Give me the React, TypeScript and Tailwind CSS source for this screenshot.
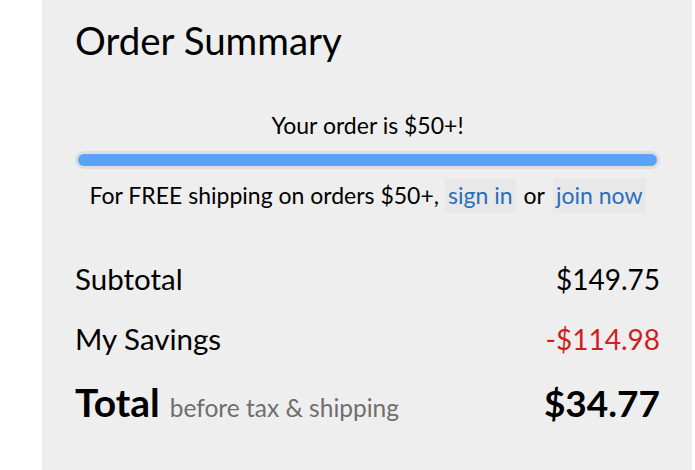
export default function App() {
  return (
    <div className="min-h-screen bg-white font-['Lato',sans-serif] text-black">
      <div className="ml-[42px] mr-[3px] h-[470px] bg-[#eeeeee] pl-[33px] pr-[32px] pt-[18px]">
        <h1 className="text-[38.5px] leading-[44px]">Order Summary</h1>

        <div className="mt-[49px] text-center text-[23px] leading-[28px]">Your order is $50+!</div>
        <div className="mt-[12px] h-[18px] rounded-full bg-[#dedede] p-[3px]">
          <div className="h-full w-full rounded-full bg-[#5aa3f7]" />
        </div>
        <p className="mt-[9px] flex items-center justify-center text-[23px] leading-[35px]">
          <span>For FREE shipping on orders $50+,</span>
          <a className="ml-[6px] bg-[#e8e8e8] px-[3px] text-[#2a6dbd]">sign in</a>
          <span className="mx-[8px]">or</span>
          <a className="bg-[#e8e8e8] px-[3px] text-[#2a6dbd]">join now</a>
        </p>

        <div className="mt-[47px] flex flex-col gap-[22px]">
          <div className="flex items-baseline justify-between leading-[38px]">
            <span className="text-[29.5px]">Subtotal</span>
            <span className="text-[28px]">$149.75</span>
          </div>
          <div className="flex items-baseline justify-between leading-[38px]">
            <span className="text-[29.5px]">My Savings</span>
            <span className="text-[28px] text-[#cf1f1f]">-$114.98</span>
          </div>
          <div className="flex items-baseline justify-between leading-[44px]">
            <span>
              <span className="text-[39px] font-bold">Total</span>
              <span className="ml-[10px] text-[24.5px] text-[#6e6e6e]">before tax &amp; shipping</span>
            </span>
            <span className="text-[37px] font-bold">$34.77</span>
          </div>
        </div>
      </div>
    </div>
  );
}
